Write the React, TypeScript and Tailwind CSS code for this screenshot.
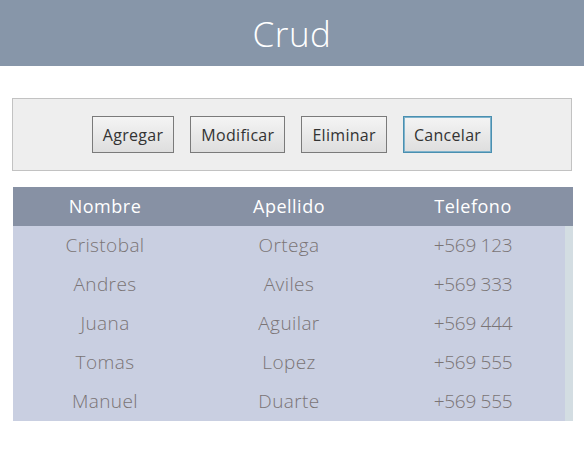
import React from "react";

const rows = [
  ["Cristobal", "Ortega", "+569 123"],
  ["Andres", "Aviles", "+569 333"],
  ["Juana", "Aguilar", "+569 444"],
  ["Tomas", "Lopez", "+569 555"],
  ["Manuel", "Duarte", "+569 555"],
];

const btn =
  "h-[37px] px-[10px] border border-[#7a7a7a] bg-gradient-to-b from-[#f4f4f4] to-[#dedede] text-[16px] tracking-[0.3px] text-[#333333]";

export default function App() {
  return (
    <div className="w-[584px] h-[462px] bg-white" style={{ fontFamily: '"Open Sans", "Noto Sans", sans-serif' }}>
      <div className="h-[66px] bg-[#8796a9] flex items-center justify-center">
        <h1 className="text-[35px] font-light text-white leading-none tracking-[0.5px]">Crud</h1>
      </div>
      <div className="px-[12px] pt-[32px]">
        <div className="h-[73px] bg-[#eeeeee] border border-[#c2c2c2] flex items-center justify-center gap-[16px]">
          <button className={btn}>Agregar</button>
          <button className={btn}>Modificar</button>
          <button className={btn}>Eliminar</button>
          <button className={btn + " !border-[#4a8fb0] shadow-[inset_0_0_0_1px_#7fb3cc]"}>Cancelar</button>
        </div>
      </div>
      <div className="ml-[13px] mt-[16px] w-[560px]">
        <div className="h-[39px] bg-[#8791a4] grid grid-cols-[184px_184px_184px] items-center text-white text-[18px] tracking-[0.5px]">
          <div className="text-center">Nombre</div>
          <div className="text-center">Apellido</div>
          <div className="text-center">Telefono</div>
        </div>
        <div className="flex">
          <div className="w-[552px] bg-[#c9cfe1]">
            {rows.map((r, i) => (
              <div key={i} className="h-[39px] grid grid-cols-[184px_184px_184px] items-center text-[19px] font-light text-[#7a7475]">
                <div className="text-center tracking-[0.4px]">{r[0]}</div>
                <div className="text-center tracking-[0.4px]">{r[1]}</div>
                <div className="text-center tracking-[-0.3px]">{r[2]}</div>
              </div>
            ))}
          </div>
          <div className="w-[8px] bg-[#d3dde2]" />
        </div>
      </div>
    </div>
  );
}
